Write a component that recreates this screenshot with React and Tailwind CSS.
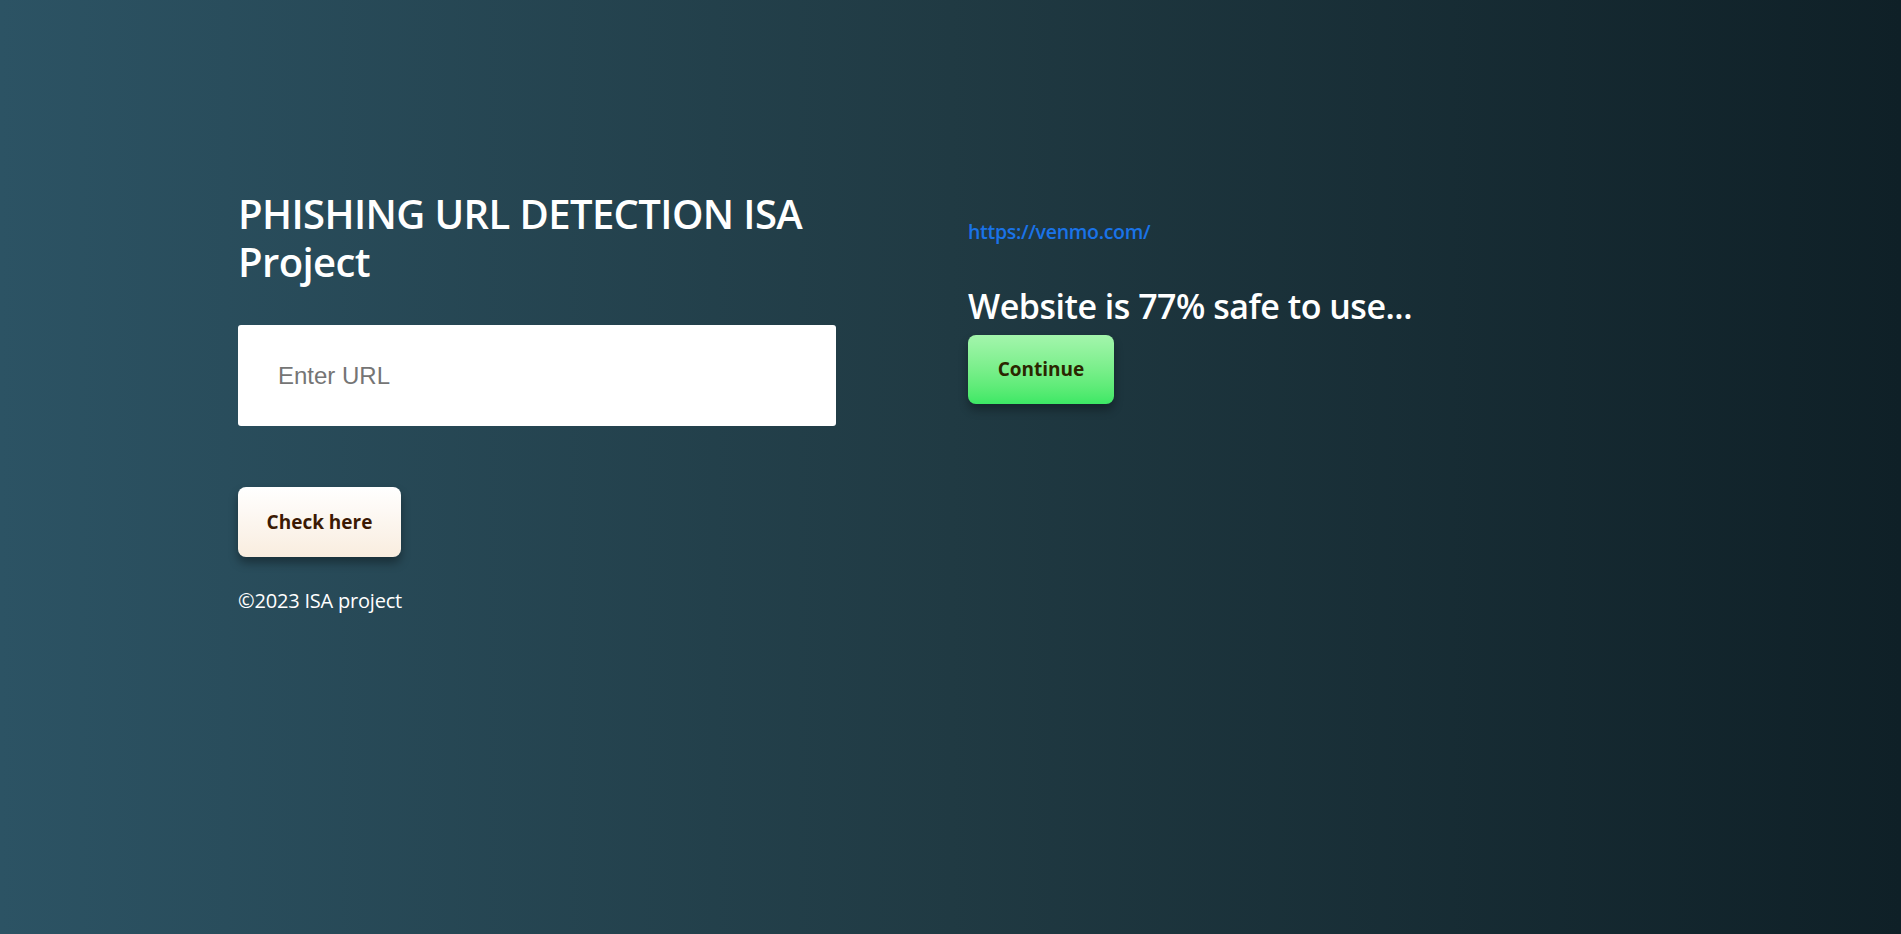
export default function App() {
  const sans = { fontFamily: '"Open Sans", "Noto Sans", sans-serif' };
  return (
    <div
      className="min-h-screen w-full bg-gradient-to-r from-[#2c5364] via-[#203a43] to-[#0f2027] text-white"
      style={sans}
    >
      <div className="flex pl-[238px] pt-[190px]">
        <div className="w-[598px] flex flex-col">
          <h1 className="text-[40px] leading-[48px] font-semibold tracking-[-0.6px]">
            PHISHING URL DETECTION ISA Project
          </h1>
          <input
            type="text"
            placeholder="Enter URL"
            className="mt-[39px] h-[101px] w-[598px] rounded-[3px] bg-white pl-[40px] text-[24px] text-black placeholder:text-[#757575] outline-none"
            style={{ fontFamily: '"Liberation Sans", Arial, sans-serif' }}
          />
          <div className="mt-[61px]">
            <button className="h-[70px] w-[163px] rounded-[8px] bg-gradient-to-b from-white to-[#f9eddf] text-[19px] font-bold text-[#3b1a04] shadow-[0_6px_10px_rgba(0,0,0,0.35)]">
              Check here
            </button>
          </div>
          <p className="mt-[32px] text-[20px] leading-[24px] tracking-[-0.2px]">©2023 ISA project</p>
        </div>
        <div className="ml-[132px] flex flex-col pt-[29px]">
          <a href="#" className="text-[19.5px] leading-[26px] font-semibold text-[#1a73e8] tracking-[-0.3px]">
            https://venmo.com/
          </a>
          <h2 className="mt-[39px] text-[34px] leading-[44px] font-semibold tracking-[-0.5px]">
            Website is 77% safe to use...
          </h2>
          <div className="mt-[7px]">
            <button className="h-[69px] w-[146px] rounded-[8px] bg-gradient-to-b from-[#a3f5ac] to-[#3ce865] text-[19px] font-bold text-[#2b2600] shadow-[0_6px_10px_rgba(0,0,0,0.3)]">
              Continue
            </button>
          </div>
        </div>
      </div>
    </div>
  );
}
